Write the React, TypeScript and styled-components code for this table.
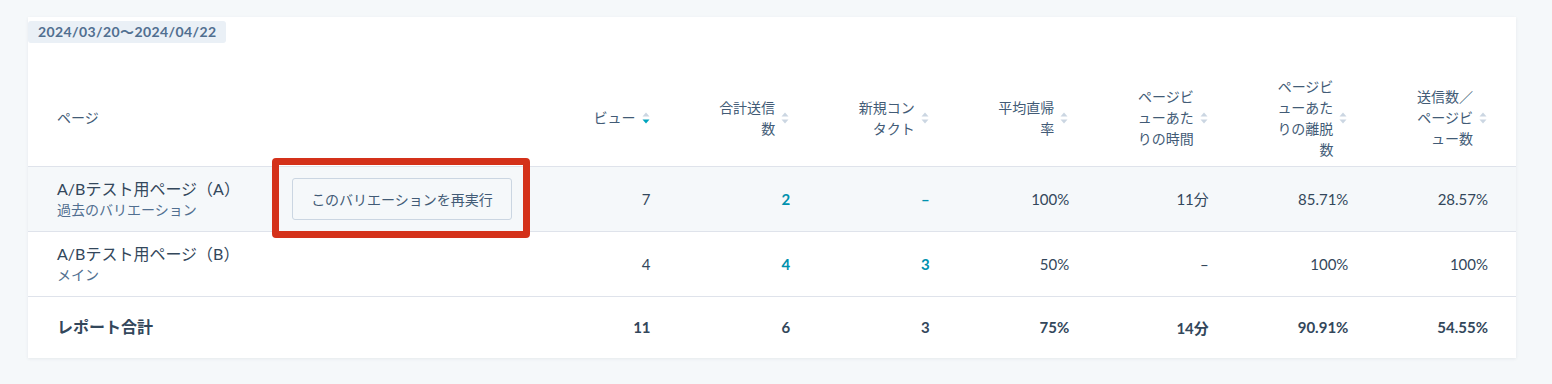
import React from "react";
import styled, { createGlobalStyle } from "styled-components";

const GlobalStyle = createGlobalStyle`
  html, body {
    margin: 0;
    padding: 0;
    background: #f5f8fa;
  }
  body {
    font-family: Lato, "Noto Sans CJK JP", sans-serif;
    color: #33475b;
  }
`;

const Page = styled.div`
  width: 1552px;
  height: 384px;
  box-sizing: border-box;
  padding: 17px 36px 0 28px;
`;

const Card = styled.div`
  background: #fff;
  box-shadow: 0 1px 3px rgba(45, 62, 80, 0.08);
`;

const DateTag = styled.span`
  display: inline-block;
  margin-top: 4px;
  padding: 0 10px;
  height: 22px;
  line-height: 22px;
  background: #eaf0f6;
  border-radius: 3px;
  color: #516f90;
  font-size: 14px;
  letter-spacing: 0.4px;
  font-weight: 700;
`;

const Table = styled.table`
  width: 100%;
  margin-top: 27px;
  border-collapse: collapse;
  table-layout: fixed;
`;

const HeadRow = styled.tr`
  height: 96px;
  border-bottom: 1px solid #dfe3eb;
`;

const Th = styled.th<{ $first?: boolean }>`
  padding: ${(p) => (p.$first ? "0 0 0 29px" : "0 28px 0 0")};
  text-align: ${(p) => (p.$first ? "left" : "right")};
  vertical-align: middle;
  font-size: 14px;
  font-weight: 400;
  line-height: 21px;
  color: #425b76;
`;

const HeadInner = styled.span`
  display: inline-flex;
  align-items: center;
  gap: 5px;
`;

const HeadText = styled.span`
  display: flex;
  flex-direction: column;
  align-items: flex-end;
`;

const Row = styled.tr<{ $hover?: boolean; $total?: boolean }>`
  height: ${(p) => (p.$total ? "62px" : "65px")};
  background: ${(p) => (p.$hover ? "#f5f8fa" : "#fff")};
  border-bottom: ${(p) => (p.$total ? "none" : "1px solid #dfe3eb")};
`;

const NameCell = styled.td`
  padding: 0 0 0 29px;
  vertical-align: middle;
`;

const NameWrap = styled.div`
  display: flex;
  align-items: center;
`;

const NameBlock = styled.div`
  width: 235px;
  display: flex;
  flex-direction: column;
`;

const Title = styled.span<{ $bold?: boolean }>`
  font-size: 16px;
  line-height: 22px;
  font-weight: ${(p) => (p.$bold ? 700 : 400)};
  color: #33475b;
`;

const Sub = styled.span`
  font-size: 14px;
  line-height: 20px;
  color: #516f90;
`;

const Highlight = styled.span`
  position: relative;
  display: inline-block;

  &::after {
    content: "";
    position: absolute;
    top: -20px;
    left: -20px;
    right: -18px;
    bottom: -18px;
    border: 7px solid #d4311a;
    border-radius: 4px;
    pointer-events: none;
  }
`;

const Button = styled.button`
  height: 42px;
  width: 220px;
  background: #f5f8fa;
  border: 1px solid #cbd6e2;
  border-radius: 3px;
  font-family: inherit;
  font-size: 14px;
  color: #425b76;
  cursor: pointer;
`;

const Td = styled.td<{ $bold?: boolean; $link?: boolean }>`
  padding: 0 28px 0 0;
  text-align: right;
  vertical-align: middle;
  font-size: 15px;
  font-weight: ${(p) => (p.$bold || p.$link ? 700 : 400)};
  color: ${(p) => (p.$link ? "#0091ae" : "#33475b")};
`;

function SortIcon({ active }: { active?: boolean }) {
  return (
    <svg width="10" height="16" viewBox="0 0 10 16">
      <path d="M5 2.5 L8.5 6.5 L1.5 6.5 Z" fill="#cbd6e2" />
      <path d="M1.5 9.5 L8.5 9.5 L5 13.5 Z" fill={active ? "#00a4bd" : "#cbd6e2"} />
    </svg>
  );
}

const columns: { lines: string[]; active?: boolean }[] = [
  { lines: ["ビュー"], active: true },
  { lines: ["合計送信", "数"] },
  { lines: ["新規コン", "タクト"] },
  { lines: ["平均直帰", "率"] },
  { lines: ["ページビ", "ューあた", "りの時間"] },
  { lines: ["ページビ", "ューあた", "りの離脱", "数"] },
  { lines: ["送信数／", "ページビ", "ュー数"] },
];

type Cell = { v: string; link?: boolean };

const rows: { title: string; sub: string; hover?: boolean; rerun?: boolean; cells: Cell[] }[] = [
  {
    title: "A/Bテスト用ページ（A）",
    sub: "過去のバリエーション",
    hover: true,
    rerun: true,
    cells: [
      { v: "7" },
      { v: "2", link: true },
      { v: "–", link: true },
      { v: "100%" },
      { v: "11分" },
      { v: "85.71%" },
      { v: "28.57%" },
    ],
  },
  {
    title: "A/Bテスト用ページ（B）",
    sub: "メイン",
    cells: [
      { v: "4" },
      { v: "4", link: true },
      { v: "3", link: true },
      { v: "50%" },
      { v: "–" },
      { v: "100%" },
      { v: "100%" },
    ],
  },
];

const totals = ["11", "6", "3", "75%", "14分", "90.91%", "54.55%"];

export default function App() {
  return (
    <Page>
      <GlobalStyle />
      <Card>
        <DateTag>2024/03/20〜2024/04/22</DateTag>
        <Table>
          <colgroup>
            <col style={{ width: 511 }} />
            {columns.map((_, i) => (
              <col key={i} />
            ))}
          </colgroup>
          <thead>
            <HeadRow>
              <Th $first>ページ</Th>
              {columns.map((c, i) => (
                <Th key={i}>
                  <HeadInner>
                    <HeadText>
                      {c.lines.map((l, j) => (
                        <span key={j}>{l}</span>
                      ))}
                    </HeadText>
                    <SortIcon active={c.active} />
                  </HeadInner>
                </Th>
              ))}
            </HeadRow>
          </thead>
          <tbody>
            {rows.map((r, i) => (
              <Row key={i} $hover={r.hover}>
                <NameCell>
                  <NameWrap>
                    <NameBlock>
                      <Title>{r.title}</Title>
                      <Sub>{r.sub}</Sub>
                    </NameBlock>
                    {r.rerun && (
                      <Highlight>
                        <Button>このバリエーションを再実行</Button>
                      </Highlight>
                    )}
                  </NameWrap>
                </NameCell>
                {r.cells.map((c, j) => (
                  <Td key={j} $link={c.link}>
                    {c.v}
                  </Td>
                ))}
              </Row>
            ))}
            <Row $total>
              <NameCell>
                <Title $bold>レポート合計</Title>
              </NameCell>
              {totals.map((t, j) => (
                <Td key={j} $bold>
                  {t}
                </Td>
              ))}
            </Row>
          </tbody>
        </Table>
      </Card>
    </Page>
  );
}
